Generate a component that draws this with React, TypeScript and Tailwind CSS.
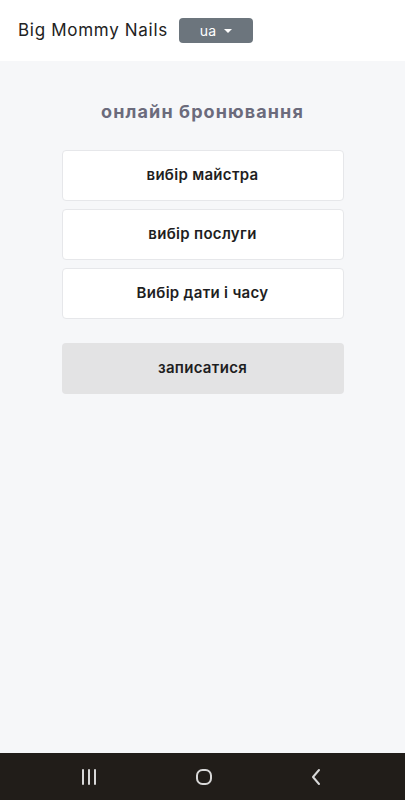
const steps = ["вибір майстра", "вибір послуги", "Вибір дати і часу"];

export default function App() {
  return (
    <div className="flex h-[800px] w-[405px] flex-col bg-[#f6f7f9] font-['Inter',sans-serif]">
      <header className="flex h-[61px] items-center gap-[11px] bg-white pl-[18px]">
        <span className="text-[17px] font-normal tracking-[0.7px] text-[#222]">Big Mommy Nails</span>
        <button className="flex h-[25px] w-[74px] items-center justify-center gap-2 rounded-[4px] bg-[#6c757d] text-[14px] text-white">
          ua
          <span className="h-0 w-0 border-x-[4px] border-t-[4px] border-x-transparent border-t-white" />
        </button>
      </header>

      <main className="flex flex-1 flex-col items-center pt-[37px]">
        <h1 className="text-[18px] font-bold tracking-[1.1px] text-[#6b6b7c]">онлайн бронювання</h1>

        <div className="mt-[25px] flex w-[282px] flex-col gap-2">
          {steps.map((s) => (
            <button
              key={s}
              className="h-[51px] rounded-[4px] border border-[#e6e7ea] bg-white text-[15px] font-semibold tracking-[0.3px] text-[#1e1e22]"
            >
              {s}
            </button>
          ))}
          <button className="mt-[16px] h-[51px] rounded-[4px] bg-[#e3e3e4] text-[15px] font-semibold tracking-[0.3px] text-[#1e1e22]">
            записатися
          </button>
        </div>
      </main>

      <nav className="flex h-[47px] items-center justify-between bg-[#211d19] pl-[80px] pr-[82px]">
        <svg width="18" height="18" viewBox="0 0 18 18" fill="none" stroke="#d8d8d8" strokeWidth="2" strokeLinecap="round">
          <path d="M3 2v14M9 2v14M15 2v14" />
        </svg>
        <svg width="18" height="18" viewBox="0 0 18 18" fill="none" stroke="#d8d8d8" strokeWidth="2">
          <rect x="2" y="2" width="14" height="14" rx="5.5" />
        </svg>
        <svg width="14" height="18" viewBox="0 0 14 18" fill="none" stroke="#d8d8d8" strokeWidth="2" strokeLinecap="round" strokeLinejoin="round">
          <path d="M10 2L4 9l6 7" />
        </svg>
      </nav>
    </div>
  );
}
